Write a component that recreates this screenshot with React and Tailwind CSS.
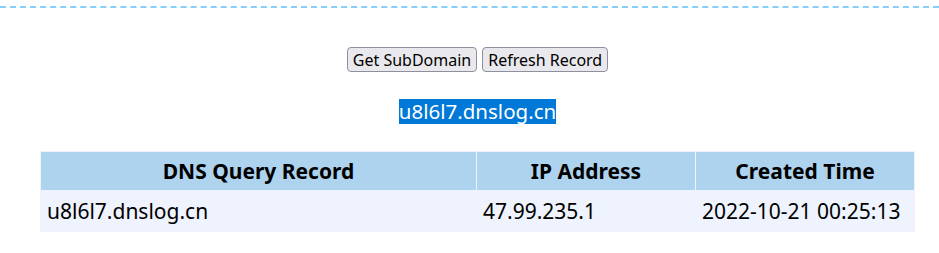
import React from 'react'

const rows = [
  { domain: 'u8l6l7.dnslog.cn', ip: '47.99.235.1', time: '2022-10-21 00:25:13' },
]

export default function App() {
  return (
    <div className="w-[939px] h-[253px] bg-white pt-[6px]" style={{ fontFamily: '"Noto Sans", "Open Sans", sans-serif' }}>
      <div className="border-t-2 border-dashed border-[#87cefa]"></div>
      <div className="ml-[40px] w-[875px] flex flex-col items-center">
        <div className="flex gap-[5px] mt-[39px]">
          <button className="h-[25px] px-[5px] text-[16px] leading-none text-black bg-[#e9e9ed] border border-[#8f8f9d] rounded-[4px]">Get SubDomain</button>
          <button className="h-[25px] px-[5px] text-[16px] leading-none text-black bg-[#e9e9ed] border border-[#8f8f9d] rounded-[4px]">Refresh Record</button>
        </div>
        <div className="mt-[27px] h-[25px] flex items-center bg-[#0078d7] text-white text-[20.5px] leading-none">u8l6l7.dnslog.cn</div>
        <table className="mt-[27px] w-full border-separate border-spacing-[1px] bg-[#edf2fd] text-black">
          <thead>
            <tr className="bg-[#aed3ee]">
              <th className="w-[435px] h-[38px] pt-[2px] text-[21px] font-bold">DNS Query Record</th>
              <th className="w-[218px] h-[38px] pt-[2px] text-[21px] font-bold">IP Address</th>
              <th className="h-[38px] pt-[2px] text-[21px] font-bold">Created Time</th>
            </tr>
          </thead>
          <tbody>
            {rows.map((r) => (
              <tr key={r.domain} className="bg-[#eef3fe]">
                <td className="h-[40px] px-[6px] pt-[2px] text-[21px]">{r.domain}</td>
                <td className="h-[40px] px-[6px] pt-[2px] text-[21px]">{r.ip}</td>
                <td className="h-[40px] px-[6px] pt-[2px] text-[21px]">{r.time}</td>
              </tr>
            ))}
          </tbody>
        </table>
      </div>
    </div>
  )
}
